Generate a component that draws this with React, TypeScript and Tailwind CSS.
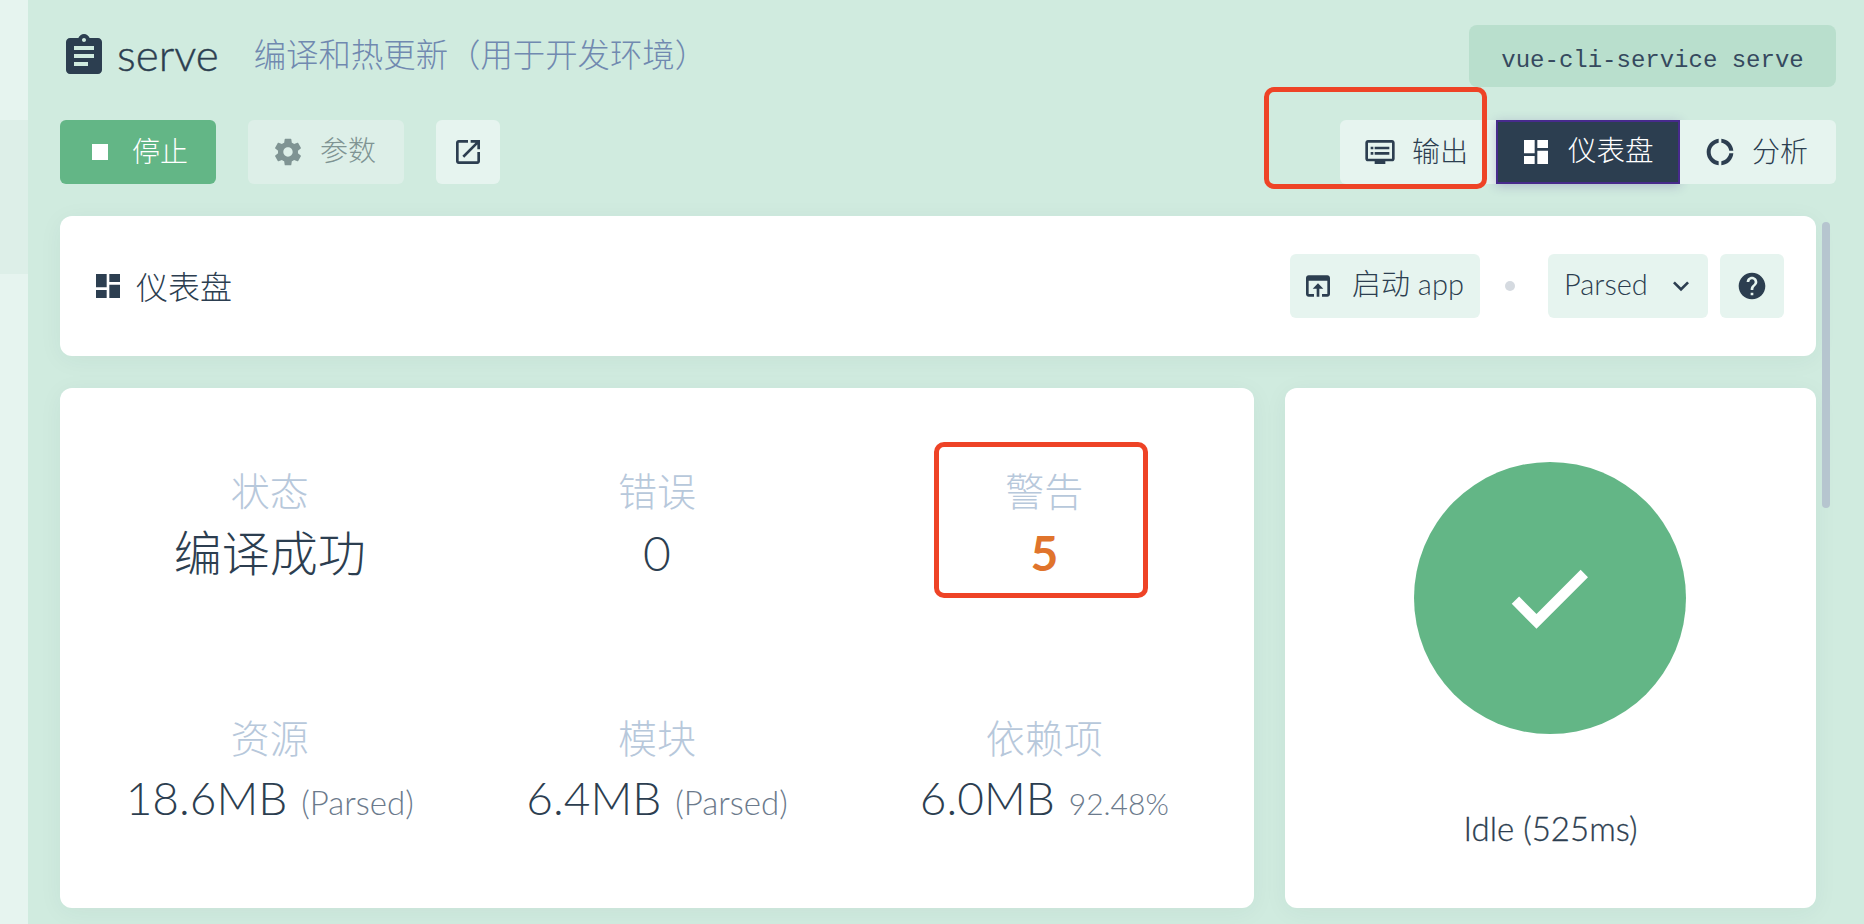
import type { ReactNode } from "react";

const ICONS = {
  assignment:
    "M19 3h-4.18C14.4 1.84 13.3 1 12 1c-1.3 0-2.4.84-2.82 2H5c-1.1 0-2 .9-2 2v14c0 1.1.9 2 2 2h14c1.1 0 2-.9 2-2V5c0-1.1-.9-2-2-2zm-7 0c.55 0 1 .45 1 1s-.45 1-1 1-1-.45-1-1 .45-1 1-1zm2 14H7v-2h7v2zm3-4H7v-2h10v2zm0-4H7V7h10v2z",
  settings:
    "M19.43 12.98c.04-.32.07-.64.07-.98s-.03-.66-.07-.98l2.11-1.65c.19-.15.24-.42.12-.64l-2-3.46c-.12-.22-.39-.3-.61-.22l-2.49 1c-.52-.4-1.08-.73-1.69-.98l-.38-2.65C14.46 2.18 14.25 2 14 2h-4c-.25 0-.46.18-.49.42l-.38 2.65c-.61.25-1.17.59-1.69.98l-2.49-1c-.23-.09-.49 0-.61.22l-2 3.46c-.13.22-.07.49.12.64l2.11 1.65c-.04.32-.07.65-.07.98s.03.66.07.98l-2.11 1.65c-.19.15-.24.42-.12.64l2 3.46c.12.22.39.3.61.22l2.49-1c.52.4 1.08.73 1.69.98l.38 2.65c.03.24.24.42.49.42h4c.25 0 .46-.18.49-.42l.38-2.65c.61-.25 1.17-.59 1.69-.98l2.49 1c.23.09.49 0 .61-.22l2-3.46c.12-.22.07-.49-.12-.64l-2.11-1.65zM12 15.5c-1.93 0-3.5-1.57-3.5-3.5s1.57-3.5 3.5-3.5 3.5 1.57 3.5 3.5-1.57 3.5-3.5 3.5z",
  openNew:
    "M19 19H5V5h7V3H5c-1.11 0-2 .9-2 2v14c0 1.1.89 2 2 2h14c1.1 0 2-.9 2-2v-7h-2v7zM14 3v2h3.59l-9.83 9.83 1.41 1.41L19 6.41V10h2V3h-7z",
  dvr: "M21 3H3c-1.1 0-2 .9-2 2v12c0 1.1.9 2 2 2h5v2h8v-2h5c1.1 0 1.99-.9 1.99-2L23 5c0-1.1-.9-2-2-2zm0 14H3V5h18v12zm-2-9H8v2h11V8zm0 4H8v2h11v-2zM7 8H5v2h2V8zm0 4H5v2h2v-2z",
  dashboard: "M3 13h8V3H3v10zm0 8h8v-6H3v6zm10 0h8V11h-8v10zm0-18v6h8V3h-8z",
  donut:
    "M11 5.08V2c-5 .5-9 4.81-9 10s4 9.5 9 10v-3.08c-3-.48-6-3.19-6-6.92s3-6.44 6-6.92zM18.97 11H22c-.47-5-4-8.53-9-9v3.08C16 5.51 18.54 8 18.97 11zM13 18.92V22c5-.47 8.53-4 9-9h-3.03c-.43 3-2.97 5.49-5.97 5.92z",
  browser:
    "M19 4H5c-1.11 0-2 .9-2 2v12c0 1.1.89 2 2 2h4v-2H5V8h14v10h-4v2h4c1.1 0 2-.9 2-2V6c0-1.1-.89-2-2-2zm-7 6l-4 4h3v6h2v-6h3l-4-4z",
  expand: "M16.59 8.59L12 13.17 7.41 8.59 6 10l6 6 6-6z",
  help: "M12 2C6.48 2 2 6.48 2 12s4.48 10 10 10 10-4.48 10-10S17.52 2 12 2zm1 17h-2v-2h2v2zm2.07-7.75l-.9.92C13.45 12.9 13 13.5 13 15h-2v-.5c0-1.1.45-2.1 1.17-2.83l1.24-1.26c.37-.36.59-.86.59-1.41 0-1.1-.9-2-2-2s-2 .9-2 2H8c0-2.21 1.79-4 4-4s4 1.79 4 4c0 .88-.36 1.68-.93 2.25z",
  done: "M9 16.17L4.83 12l-1.42 1.41L9 19 21 7l-1.41-1.41z",
};

function Icon({ name, className }: { name: keyof typeof ICONS; className: string }) {
  return (
    <svg viewBox="0 0 24 24" fill="currentColor" className={className}>
      <path d={ICONS[name]} />
    </svg>
  );
}

function Stat({ label, children }: { label: string; children: ReactNode }) {
  return (
    <div className="flex flex-col items-center">
      <div className="text-[39px] leading-[46px] font-light text-[#b7c8db]">{label}</div>
      <div className="mt-[11px] h-[56px] text-[48px] leading-[56px] font-light whitespace-nowrap">
        {children}
      </div>
    </div>
  );
}

function Size({ value, unit, small }: { value: string; unit: string; small?: boolean }) {
  return (
    <div className="flex items-baseline">
      <span className="text-[46px] leading-[52px]">{value}</span>
      <span className={`ml-[14px] font-light text-[#6b7a8c] ${small ? "text-[30px]" : "text-[33px]"}`}>
        {unit}
      </span>
    </div>
  );
}

export default function App() {
  return (
    <div className="flex h-[924px] w-[1864px] overflow-hidden bg-[#d0ebdf] font-[Lato,'Noto_Sans_CJK_SC',sans-serif] text-[#2c3e50]">
      <div className="flex w-[28px] shrink-0 flex-col bg-[#e6f4ef]">
        <div className="h-[120px]" />
        <div className="h-[154px] bg-[#ddefe8]" />
      </div>

      <div className="relative flex-1 pl-[32px]">
        <div className="mt-[25px] flex h-[62px] justify-between pr-[28px]">
          <div className="flex items-start pt-[7px]">
            <Icon name="assignment" className="h-[48px] w-[48px]" />
            <span className="ml-[9px] mt-[-1px] text-[44px] leading-[46px] font-light [-webkit-text-stroke:0.4px_#2c3e50]">serve</span>
            <span className="ml-[35px] text-[32.4px] leading-[46px] font-light text-[#7089b0]">
              编译和热更新（用于开发环境）
            </span>
          </div>
          <div className="flex w-[367px] items-center justify-center rounded-[8px] bg-[#b9dfcd] pt-[9px] font-['Liberation_Mono',monospace] text-[24px] text-[#35495e]">
            vue-cli-service serve
          </div>
        </div>

        <div className="mt-[33px] flex h-[64px] pr-[28px]">
          <button className="flex w-[156px] items-center rounded-[6px] bg-[#63b686] pl-[32px] text-[28px] font-light text-white">
            <span className="mr-[24px] h-[16px] w-[16px] bg-white" />
            <span className="mb-[3px]">停止</span>
          </button>
          <button className="ml-[32px] flex w-[156px] items-center rounded-[6px] bg-[#ddefe8] pl-[24px] text-[28px] font-light text-[#7f9493]">
            <Icon name="settings" className="mr-[16px] h-[32px] w-[32px]" />
            <span className="mb-[4px]">参数</span>
          </button>
          <button className="ml-[32px] flex w-[64px] items-center justify-center rounded-[6px] bg-[#e6f4ef]">
            <Icon name="openNew" className="h-[32px] w-[32px]" />
          </button>
          <div className="ml-auto flex">
            <button className="flex w-[156px] items-center rounded-l-[6px] bg-[#e6f4ef] pl-[24px] text-[28px] font-light">
              <Icon name="dvr" className="mr-[16px] h-[32px] w-[32px]" />
              <span className="mb-[3px]">输出</span>
            </button>
            <button className="flex w-[184px] items-center border-2 border-[#472a8c] bg-[#2c3e50] pl-[22px] text-[28.5px] font-light text-white shadow-[0_2px_10px_rgba(71,42,140,0.25)]">
              <Icon name="dashboard" className="mr-[16px] h-[32px] w-[32px]" />
              <span className="mb-[3px]">仪表盘</span>
            </button>
            <button className="flex w-[156px] items-center rounded-r-[6px] bg-[#e6f4ef] pl-[24px] text-[28px] font-light">
              <Icon name="donut" className="mr-[16px] h-[32px] w-[32px]" />
              <span className="mb-[3px]">分析</span>
            </button>
          </div>
        </div>

        <div className="mt-[32px] mr-[48px] flex h-[140px] items-center rounded-[12px] bg-white pl-[32px] pr-[32px] shadow-[0_4px_24px_rgba(44,62,80,0.05)]">
          <Icon name="dashboard" className="h-[32px] w-[32px]" />
          <span className="ml-[12px] mt-[1px] text-[32px] font-light">仪表盘</span>
          <button className="ml-auto flex h-[64px] w-[190px] items-center rounded-[6px] bg-[#e6f4ef] pl-[12px] text-[29px] font-light">
            <Icon name="browser" className="mr-[18px] h-[32px] w-[32px]" />
            <span className="mb-[4px]">启动 app</span>
          </button>
          <span className="ml-[25px] mr-[33px] h-[10px] w-[10px] rounded-full bg-[#d5dae0]" />
          <button className="flex h-[64px] w-[160px] items-center rounded-[6px] bg-[#e6f4ef] pl-[16px] text-[29px] font-light">
            <span className="mb-[4px]">Parsed</span>
            <Icon name="expand" className="ml-auto mr-[11px] h-[32px] w-[32px]" />
          </button>
          <button className="ml-[12px] flex h-[64px] w-[64px] items-center justify-center rounded-[6px] bg-[#e6f4ef]">
            <Icon name="help" className="h-[32px] w-[32px]" />
          </button>
        </div>

        <div className="mt-[32px] mr-[48px] flex h-[520px] gap-[31px]">
          <div className="relative w-[1194px] rounded-[12px] bg-white px-[16px] pt-[80px] shadow-[0_4px_24px_rgba(44,62,80,0.05)]">
            <div className="grid grid-cols-3 gap-y-[134px]">
              <Stat label="状态">编译成功</Stat>
              <Stat label="错误">0</Stat>
              <Stat label="警告">
                <span className="font-bold text-[#e0742c]">5</span>
              </Stat>
              <Stat label="资源">
                <Size value="18.6MB" unit="(Parsed)" />
              </Stat>
              <Stat label="模块">
                <Size value="6.4MB" unit="(Parsed)" />
              </Stat>
              <Stat label="依赖项">
                <Size value="6.0MB" unit="92.48%" small />
              </Stat>
            </div>
            <div className="absolute left-[874px] top-[54px] h-[156px] w-[214px] rounded-[10px] border-[5px] border-[#ee4326]" />
          </div>
          <div className="flex flex-1 flex-col items-center rounded-[12px] bg-white pt-[74px] shadow-[0_4px_24px_rgba(44,62,80,0.05)]">
            <div className="mr-[1px] flex h-[272px] w-[272px] items-center justify-center rounded-full bg-[#63b686] pr-[2px] text-white">
              <svg viewBox="0 0 24 24" fill="currentColor" stroke="currentColor" strokeWidth="0.5" className="h-[100px] w-[100px]">
                <path d={ICONS.done} />
              </svg>
            </div>
            <div className="mt-[74px] text-[33px] leading-[40px] font-light [-webkit-text-stroke:0.3px_#2c3e50]">Idle (525ms)</div>
          </div>
        </div>

        {/* scrollbar */}
        <div className="absolute left-[1794px] top-[222px] h-[286px] w-[8px] rounded-full bg-[#b6c5cf]" />
        {/* annotation */}
        <div className="absolute left-[1236px] top-[87px] h-[102px] w-[223px] rounded-[10px] border-[5px] border-[#ee4326]" />
      </div>
    </div>
  );
}
